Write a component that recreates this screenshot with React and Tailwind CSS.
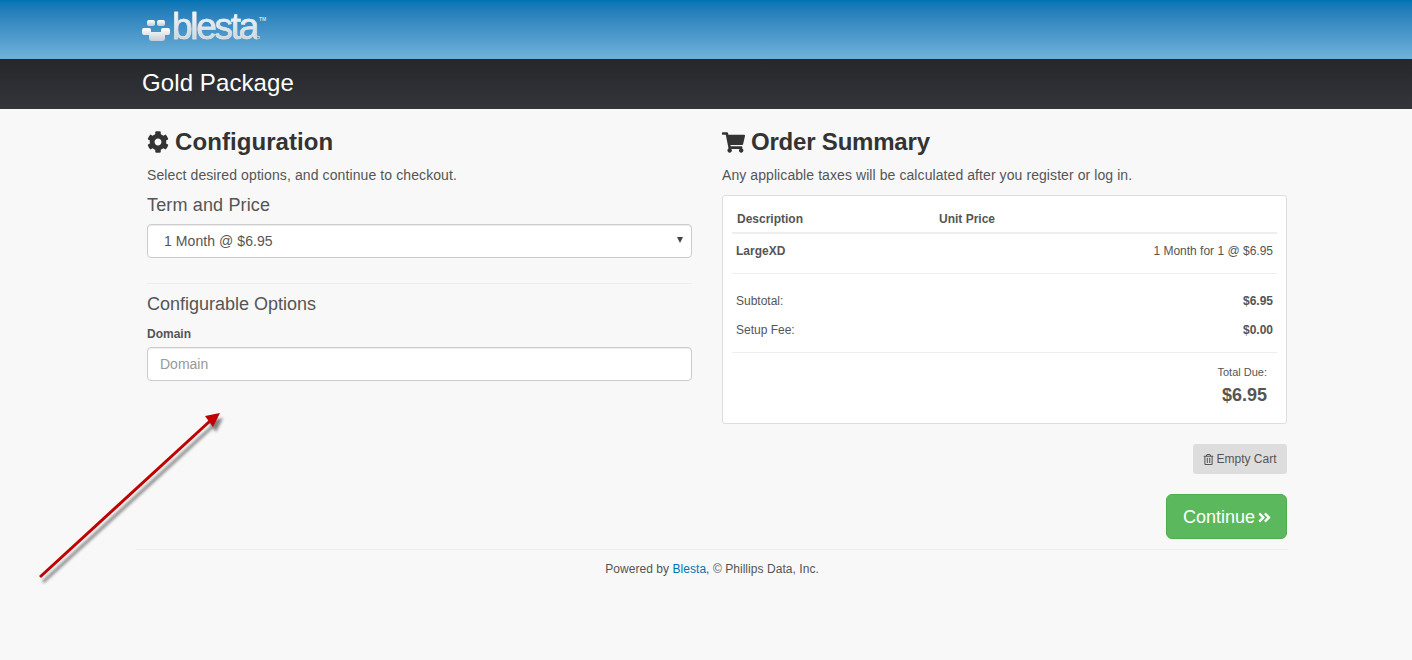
import React from "react";
import { FaCog, FaShoppingCart, FaRegTrashAlt, FaAngleDoubleRight } from "react-icons/fa";

function Logo() {
  return (
    <div className="flex items-start h-[59px] relative">
      <svg width="30" height="28" viewBox="0 0 30 28" className="mt-[16px] shrink-0">
        <defs>
          <linearGradient id="lg" x1="0" y1="0" x2="0" y2="1">
            <stop offset="0" stopColor="#ffffff" />
            <stop offset="1" stopColor="#c4ced5" />
          </linearGradient>
        </defs>
        <rect x="5" y="4" width="8" height="6" rx="2" fill="url(#lg)" />
        <rect x="15" y="4" width="8" height="6" rx="2" fill="url(#lg)" />
        <path d="M2 12h5a2 2 0 0 1 2 2v2h10v-2a2 2 0 0 1 2-2h5a2 2 0 0 1 2 2v3a2 2 0 0 1-2 2h-3v3a3 3 0 0 1-3 3H10a3 3 0 0 1-3-3v-3H2a2 2 0 0 1-2-2v-3a2 2 0 0 1 2-2z" fill="url(#lg)" />
      </svg>
      <span className="text-[37px] leading-[44px] mt-[5px] tracking-[-2.3px] bg-gradient-to-b from-white to-[#bfcbd3] bg-clip-text text-transparent [-webkit-text-stroke:0.5px_#e4ebef]">blesta</span>
      <span className="text-[5px] leading-[8px] mt-[15px] ml-[2px] font-bold text-[#cfdde6]">TM</span>
    </div>
  );
}

export default function App() {
  return (
    <div className="relative min-h-[660px] bg-[#f8f8f8] text-[#555] font-['Liberation_Sans',Arial,sans-serif] overflow-hidden">
      <header className="h-[59px] bg-gradient-to-b from-[#0073b4] to-[#6fb2d9]">
        <div className="w-[1140px] mx-auto pl-[6px]">
          <Logo />
        </div>
      </header>
      <div className="h-[50px] bg-gradient-to-b from-[#25272b] to-[#33353a]">
        <div className="w-[1140px] mx-auto pl-[6px] text-white text-2xl leading-[48px] tracking-[0.1px]">Gold Package</div>
      </div>

      <main className="w-[1140px] mx-auto flex">
        <section className="w-[556px] pl-[11px] shrink-0 pt-5">
          <h3 className="flex items-center text-[24px] leading-[26px] font-bold text-[#333] tracking-[0.08px]">
            <FaCog className="text-[22px] mr-[6px]" />
            Configuration
          </h3>
          <p className="text-sm leading-5 mt-[10px] tracking-[0.1px]">Select desired options, and continue to checkout.</p>
          <div className="text-[18px] leading-5 mt-[10px] tracking-[0.15px]">Term and Price</div>
          <div className="relative mt-[9px] h-[34px] bg-white border border-[#ccc] rounded-[4px] flex items-center pl-4 text-sm tracking-[0.07px] shadow-[inset_0_1px_1px_rgba(0,0,0,0.075)]">
            1 Month @ $6.95
            <span className="absolute right-[8px] top-[12px] w-0 h-0 border-l-[3px] border-r-[3px] border-t-[6px] border-l-transparent border-r-transparent border-t-[#444]"></span>
          </div>
          <hr className="mt-[25px] border-0 border-t border-[#eee]" />
          <div className="text-[18px] leading-5 mt-[10px]">Configurable Options</div>
          <div className="text-xs font-bold leading-4 mt-[12px] -mb-[1px]">Domain</div>
          <div className="mt-[6px] h-[34px] bg-white border border-[#ccc] rounded-[4px] flex items-center pl-3 text-sm text-[#999] shadow-[inset_0_1px_1px_rgba(0,0,0,0.075)]">
            Domain
          </div>
        </section>

        <section className="w-[565px] ml-[30px] shrink-0 pt-5">
          <h3 className="flex items-center text-[24px] leading-[26px] font-bold text-[#333] tracking-[-0.2px]">
            <FaShoppingCart className="text-[23px] mr-[6px]" />
            Order Summary
          </h3>
          <p className="text-sm leading-5 mt-[10px] tracking-[0.08px]">Any applicable taxes will be calculated after you register or log in.</p>
          <div className="mt-[10px] h-[229px] bg-white border border-[#ddd] rounded-[3px] px-[9px]">
            <div className="flex text-xs font-bold h-[38px] items-end pb-[5px] pl-[5px] border-b-2 border-[#eee]">
              <span className="w-[202px]">Description</span>
              <span>Unit Price</span>
            </div>
            <div className="flex justify-between text-xs px-1 h-[40px] pb-[6px] items-center border-b border-[#eee]">
              <span className="font-bold">LargeXD</span>
              <span>1 Month for 1 @ $6.95</span>
            </div>
            <div className="flex justify-between text-xs px-1 mt-[19px] leading-4">
              <span>Subtotal:</span>
              <span className="font-bold">$6.95</span>
            </div>
            <div className="flex justify-between text-xs px-1 mt-[13px] leading-4">
              <span>Setup Fee:</span>
              <span className="font-bold">$0.00</span>
            </div>
            <div className="mt-[14px] border-t border-[#eee] pr-[10px] text-right">
              <div className="text-[11px] leading-4 mt-[11px]">Total Due:</div>
              <div className="text-[18px] font-bold leading-5 mt-[5px]">$6.95</div>
            </div>
          </div>
          <div className="flex justify-end mt-5">
            <button className="h-[30px] w-[94px] bg-[#ddd] rounded-[3px] text-xs text-[#555] flex items-center justify-center gap-[2px]">
              <FaRegTrashAlt className="text-[11px]" />
              Empty Cart
            </button>
          </div>
          <div className="flex justify-end mt-5">
            <button className="h-[45px] w-[121px] pt-[1px] pl-[2px] bg-[#5cb85c] border border-[#4cae4c] rounded-[6px] text-[18px] text-white flex items-center justify-center gap-[2px]">
              Continue
              <FaAngleDoubleRight className="text-[15px]" />
            </button>
          </div>
        </section>
      </main>

      <footer className="w-[1152px] ml-[136px] mt-[10px] border-t border-[#eee] text-center text-xs leading-4 pt-[11px] tracking-[0.05px]">
        Powered by <span className="text-[#0074b2]">Blesta</span>, © Phillips Data, Inc.
      </footer>

      <svg className="absolute left-[30px] top-[405px]" width="200" height="185" viewBox="0 0 200 185" aria-hidden="true">
        <defs>
          <filter id="sh" x="-20%" y="-20%" width="140%" height="140%">
            <feGaussianBlur stdDeviation="1.8" />
          </filter>
        </defs>
        <g filter="url(#sh)" opacity="0.6" transform="translate(3,5)" fill="#333" stroke="#333">
          <line x1="10" y1="172" x2="180" y2="16" strokeWidth="3" />
          <polygon points="190,8 175,11 183,22" stroke="none" />
        </g>
        <line x1="10" y1="172" x2="180" y2="16" stroke="#c00000" strokeWidth="3" />
        <polygon points="190,8 175,11 183,22" fill="#c00000" />
      </svg>
    </div>
  );
}
